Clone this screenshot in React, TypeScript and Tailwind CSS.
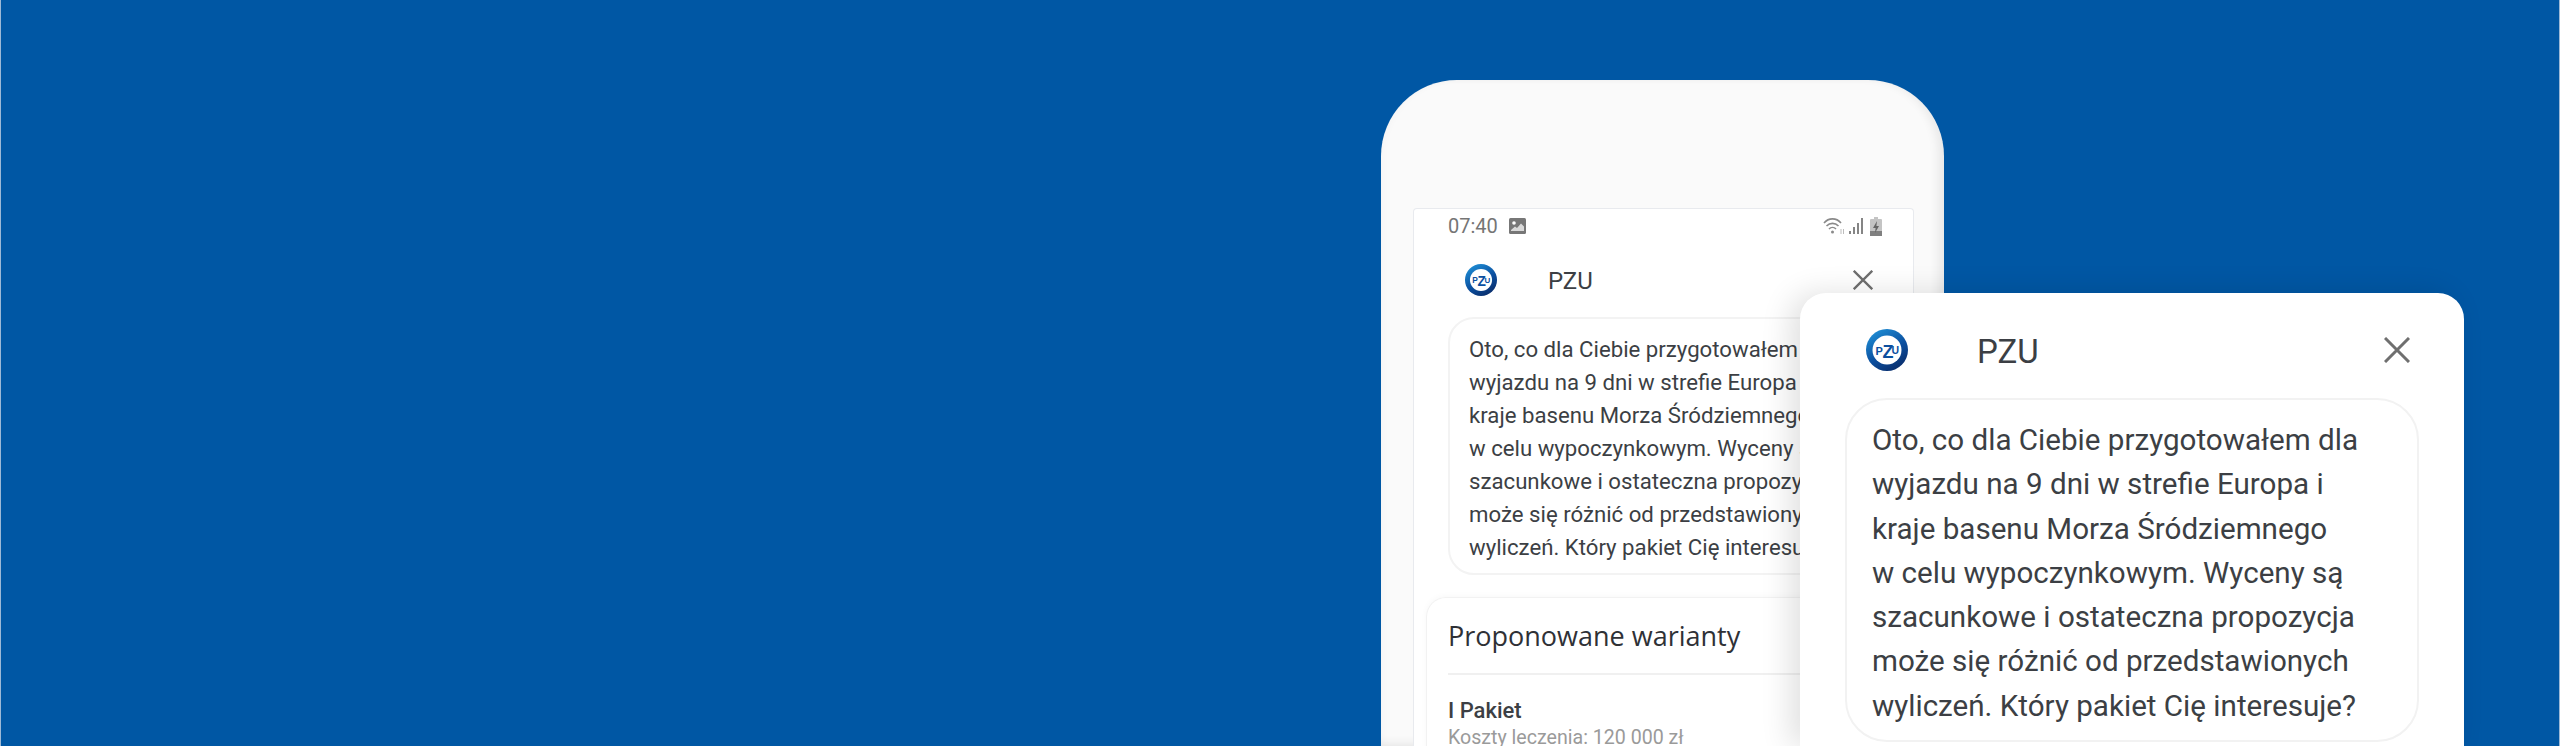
import React from "react";

function Logo({ size }: { size: number }) {
  return (
    <svg width={size} height={size} viewBox="0 0 42 42" className="shrink-0">
      <defs>
        <linearGradient id={`ring${size}`} x1="0.2" y1="0" x2="0.8" y2="1">
          <stop offset="0" stopColor="#1f8fd6" />
          <stop offset="0.55" stopColor="#0b4f9f" />
          <stop offset="1" stopColor="#0a2a66" />
        </linearGradient>
      </defs>
      <circle cx="21" cy="21" r="21" fill={`url(#ring${size})`} />
      <circle cx="21" cy="21" r="14.5" fill="#ffffff" />
      <text x="9.5" y="25.5" fontFamily="Liberation Sans" fontWeight="700" fontSize="11" fill="#0b4f9f">P</text>
      <text x="16.5" y="29" fontFamily="Liberation Sans" fontWeight="700" fontSize="18" fill="#0b4f9f">Z</text>
      <text x="25.5" y="24.5" fontFamily="Liberation Sans" fontWeight="700" fontSize="10.5" fill="#0b4f9f">U</text>
    </svg>
  );
}

function CloseIcon({ size }: { size: number }) {
  return (
    <svg width={size} height={size} viewBox="0 0 26 26" fill="none" stroke="#6f6f6f" strokeWidth="3" className="shrink-0">
      <path d="M1 1 25 25M25 1 1 25" />
    </svg>
  );
}

const lines = [
  "Oto, co dla Ciebie przygotowałem dla",
  "wyjazdu na 9 dni w strefie Europa i",
  "kraje basenu Morza Śródziemnego",
  "w celu wypoczynkowym. Wyceny są",
  "szacunkowe i ostateczna propozycja",
  "może się różnić od przedstawionych",
  "wyliczeń. Który pakiet Cię interesuje?",
];

export default function App() {
  return (
    <div className="relative h-[746px] w-[2560px] overflow-hidden border-x border-x-[#9db9d6] bg-[#0057a4] font-['Roboto',sans-serif]">
      <div className="ml-[1380px] mt-[80px] h-[666px] w-[563px] rounded-t-[76px] bg-[#fafafa] pl-[32px] pr-[30px] pt-[128px] shadow-[inset_-6px_-3px_10px_rgba(0,0,0,0.07),inset_3px_0_6px_rgba(0,0,0,0.02)]">
        <div className="h-[538px] overflow-hidden rounded-t-[4px] border border-b-0 border-[#e8eaee] bg-white">
          <div className="flex h-[34px] items-center pl-[34px] pr-[31px] text-[20px] leading-none text-[#757575]">
            <span>07:40</span>
            <svg width="17" height="16" viewBox="0 0 17 16" className="ml-[11px]">
              <rect width="17" height="16" rx="1.5" fill="#777777" />
              <circle cx="5" cy="5" r="1.8" fill="#fff" />
              <path d="M2 12 6 8.5 8 10 12 5.5 15 8.5V13H2Z" fill="#d9d9d9" />
            </svg>
            <div className="ml-auto flex items-center gap-[3px]">
              <svg width="22" height="20" viewBox="0 0 22 20" fill="none" stroke="#8a8a8a" strokeWidth="1.6">
                <path d="M1 7C5.5 1.5 13.5 1.5 18 7M3.5 10C7 6.5 12 6.5 15.5 10M6 13C8 11 11 11 13 13" />
                <circle cx="9.5" cy="16" r="1.5" fill="#8a8a8a" stroke="none" />
                <path d="M18 18V13M20.5 18V13" stroke="#bdbdbd" strokeWidth="1" />
              </svg>
              <svg width="16" height="18" viewBox="0 0 16 18" fill="#858585">
                <rect x="1" y="14" width="2" height="3" />
                <rect x="5" y="10" width="2" height="7" />
                <rect x="9" y="6" width="2" height="11" />
                <rect x="13" y="1" width="2" height="16" />
              </svg>
              <svg width="12" height="19" viewBox="0 0 12 19" className="ml-[3px]">
                <rect x="4" y="0" width="4" height="2" fill="#c4c4c4" />
                <rect x="0" y="2" width="12" height="17" rx="1" fill="#c4c4c4" />
                <rect x="0" y="14" width="12" height="5" fill="#808080" />
                <path d="M7 4 3 11H5.6L5 16 9 9H6.4Z" fill="#666666" />
              </svg>
            </div>
          </div>

          <div className="flex h-[74px] items-center pl-[51px] pr-[40px]">
            <Logo size={32} />
            <span className="ml-[51px] mt-[2px] text-[24px] text-[#3c3f44]">PZU</span>
            <div className="ml-auto">
              <CloseIcon size={20} />
            </div>
          </div>

          <div className="ml-[34px] h-[258px] w-[432px] rounded-[26px] border-2 border-[#f3f3f3] pl-[19px] pt-[14px] text-[22.2px] leading-[33px] text-[#3c3f44] whitespace-nowrap">
            {lines.map((l) => (
              <div key={l}>{l}</div>
            ))}
          </div>

          <div className="ml-[12px] mt-[22px] h-[200px] rounded-t-[20px] border border-b-0 border-[#f2f2f2] pl-[21px] pt-[18px] shadow-[0_-1px_6px_rgba(0,0,0,0.03)]">
            <div className="font-['Open_Sans',sans-serif] text-[27px] font-medium leading-[40px] text-[#2f3136]">Proponowane warianty</div>
            <div className="mt-[17px] h-[2px] bg-[#f0f0f0]" />
            <div className="mt-[22px] text-[22px] font-medium leading-[28px] text-[#3c3f44]">I Pakiet</div>
            <div className="text-[19.6px] leading-[26px] text-[#9a9a9a]">Koszty leczenia: 120 000 zł</div>
          </div>
        </div>
      </div>

      <div className="absolute left-[1799px] top-[293px] h-[453px] w-[664px] rounded-t-[26px] bg-white shadow-[-10px_0_30px_rgba(0,0,0,0.12)]">
        <div className="flex h-[105px] items-center pl-[66px] pr-[54px] pt-[9px]">
          <Logo size={42} />
          <span className="ml-[69px] mt-[3px] text-[33px] text-[#3c3f44]">PZU</span>
          <div className="ml-auto">
            <CloseIcon size={26} />
          </div>
        </div>
        <div className="ml-[45px] h-[344px] w-[574px] rounded-[42px] border-2 border-[#f2f2f2] pl-[25px] pt-[18px] text-[29.6px] leading-[44.3px] text-[#3c3f44] whitespace-nowrap">
          {lines.map((l) => (
            <div key={l}>{l}</div>
          ))}
        </div>
      </div>
    </div>
  );
}
